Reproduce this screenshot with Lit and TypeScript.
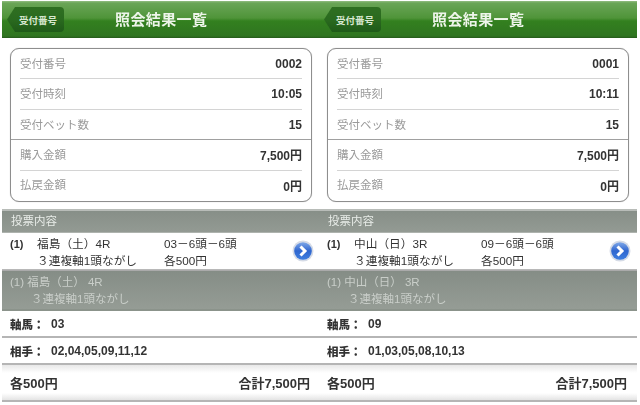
import { LitElement, html, css } from "lit";
import { customElement, property } from "lit/decorators.js";

interface Ticket {
  no: string; time: string; place: string; race: string; combo: string; axis: string; rivals: string;
}

@customElement("result-panel")
class ResultPanel extends LitElement {
  @property({ attribute: false }) t!: Ticket;
  static styles = css`
    :host { display: block; width: 318px; font-family: "Liberation Sans", "Noto Sans CJK JP", sans-serif; color: #222; filter: blur(0.55px); }
    .bar { height: 37px; margin-top: 1px; display: flex; align-items: center; position: relative;
      background: linear-gradient(#93bd83 0, #6aa557 2px, #4f9439 17px, #33801f 20px, #2f7420 35px, #26591b 37px); }
    .back { margin-left: 5px; width: 57px; height: 25px; display: flex; align-items: center; justify-content: center;
      padding-left: 5px; box-sizing: border-box; font-size: 9.5px; font-weight: bold; color: #d8e8d0;
      background: linear-gradient(#2f6f22, #2a6a1f 50%, #1f5a18);
      clip-path: polygon(0 50%, 8px 0, 100% 0, 100% 100%, 8px 100%); border-radius: 4px; }
    .title { position: absolute; left: 113px; top: 8px; font-size: 15px; line-height: 21px; font-weight: bold; color: #eef5ea; letter-spacing: 0.4px; }
    .card { margin: 10px 0 0 8px; width: 302px; border: 1px solid #8e8e8e; border-radius: 9px; background: #fff; height: 154px; box-sizing: border-box;
      display: flex; flex-direction: column; padding: 0 9px 1px 9px; box-shadow: 0 0 1px #bbb; }
    .kv { flex: 1; display: flex; align-items: center; justify-content: space-between; border-bottom: 1px solid #d4d4d4; font-size: 12px; }
    .kv:last-child { border-bottom: none; }
    .kv.heavy { border-bottom: 1px solid #a0a0a0; margin: 0 -9px; padding: 0 9px; }
    .k { color: #9a9a9a; font-size: 11.5px; margin-top: -2px; }
    .v { font-weight: bold; color: #333; }
    .sec { margin-top: 7px; height: 24px; background: linear-gradient(#878f88, #939a93); border-top: 2px solid #b8bcb8; box-sizing: border-box;
      color: #e8ece8; font-size: 11.5px; line-height: 21px; padding-left: 9px; border-bottom: 1px solid #aeb3ae; }
    .row { height: 37px; border-bottom: 1px solid #b8b8b8; box-sizing: border-box; display: grid; grid-template-columns: 27px 127px 1fr 28px;
      align-items: center; padding: 1px 0 0 8px; font-size: 11.7px; line-height: 17px; color: #333; background: #fff; }
    .num { font-weight: bold; align-self: start; margin-top: 2px; font-size: 11px; }
    .lines { display: flex; flex-direction: column; }
    .go { width: 22px; height: 22px; margin-top: -2px; }
    .gray { height: 41px; border-top: 1px solid #aaa; box-sizing: border-box; background: linear-gradient(#858d86, #959c95);
      color: #c9cec9; font-size: 11.5px; line-height: 17px; padding: 3px 0 0 8px; border-bottom: 2px solid #8b938b; display: flex; flex-direction: column; }
    .gray span:last-child { padding-left: 21px; }
    .line { height: 27px; border-bottom: 2px solid #b5b5b5; box-sizing: border-box; display: flex; align-items: center; padding-left: 8px; font-size: 12px; font-weight: bold; color: #333; background: #fff; }
    .line b { width: 41px; font-size: 11.5px; }
    .sum { height: 37px; border-bottom: 2px solid #b5b5b5; box-sizing: border-box; display: flex; align-items: center; justify-content: space-between;
      padding: 0 10px 0 8px; font-size: 13px; font-weight: bold; color: #333; background: linear-gradient(#e8e8e8, #fff 8px, #fff 28px, #e4e4e4); }
  `;
  render() {
    const t = this.t;
    return html`
      <div class="bar"><div class="back">受付番号</div><div class="title">照会結果一覧</div></div>
      <div class="card">
        <div class="kv"><span class="k">受付番号</span><span class="v">${t.no}</span></div>
        <div class="kv"><span class="k">受付時刻</span><span class="v">${t.time}</span></div>
        <div class="kv heavy"><span class="k">受付ベット数</span><span class="v">15</span></div>
        <div class="kv"><span class="k">購入金額</span><span class="v">7,500円</span></div>
        <div class="kv"><span class="k">払戻金額</span><span class="v">0円</span></div>
      </div>
      <div class="sec">投票内容</div>
      <div class="row">
        <span class="num">(1)</span>
        <div class="lines"><span>${t.place}（${t.race[0]}）${t.race.slice(1)}</span><span>３連複軸1頭ながし</span></div>
        <div class="lines"><span>${t.combo}</span><span>各500円</span></div>
        <svg class="go" viewBox="0 0 22 22">
          <defs><linearGradient id="g" x1="0" y1="0" x2="0" y2="1"><stop offset="0" stop-color="#7fa8e8"/><stop offset=".5" stop-color="#2f66cf"/><stop offset="1" stop-color="#3f7fe0"/></linearGradient></defs>
          <circle cx="11" cy="11" r="10.5" fill="#d5dbe6"/>
          <circle cx="11" cy="11" r="8.8" fill="url(#g)"/>
          <path d="M8.5 6.5 L13 11 L8.5 15.5" fill="none" stroke="#fff" stroke-width="3"/>
        </svg>
      </div>
      <div class="gray"><span>(1) ${t.place}（${t.race[0]}） ${t.race.slice(1)}</span><span>３連複軸1頭ながし</span></div>
      <div class="line"><b>軸馬：</b>${t.axis}</div>
      <div class="line"><b>相手：</b>${t.rivals}</div>
      <div class="sum"><span>各500円</span><span>合計7,500円</span></div>
    `;
  }
}

@customElement("app-root")
export class AppRoot extends LitElement {
  static styles = css`
    :host { display: block; width: 640px; height: 405px; background: #fff; overflow: hidden; }
    .wrap { display: flex; padding-left: 2px; }
    result-panel + result-panel { margin-left: -1px; }
  `;
  render() {
    const a: Ticket = { no: "0002", time: "10:05", place: "福島", race: "土4R", combo: "03－6頭－6頭", axis: "03", rivals: "02,04,05,09,11,12" };
    const b: Ticket = { no: "0001", time: "10:11", place: "中山", race: "日3R", combo: "09－6頭－6頭", axis: "09", rivals: "01,03,05,08,10,13" };
    return html`<div class="wrap"><result-panel .t=${a}></result-panel><result-panel .t=${b}></result-panel></div>`;
  }
}
void ResultPanel;
